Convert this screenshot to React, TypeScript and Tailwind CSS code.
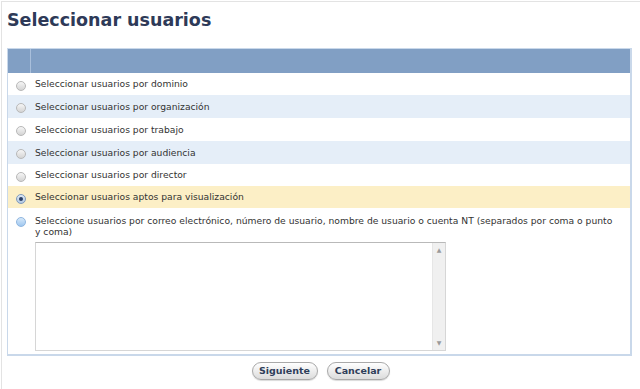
import React from "react";

type Row = { label: string; bg: string; h: string; state: "off" | "on" };

const ROWS: Row[] = [
  { label: "Seleccionar usuarios por dominio", bg: "bg-white", h: "h-[22px]", state: "off" },
  { label: "Seleccionar usuarios por organización", bg: "bg-[#e5eef8]", h: "h-[23px]", state: "off" },
  { label: "Seleccionar usuarios por trabajo", bg: "bg-white", h: "h-[23px]", state: "off" },
  { label: "Seleccionar usuarios por audiencia", bg: "bg-[#e5eef8]", h: "h-[23px]", state: "off" },
  { label: "Seleccionar usuarios por director", bg: "bg-white", h: "h-[22px]", state: "off" },
  { label: "Seleccionar usuarios aptos para visualización", bg: "bg-[#fcefc6]", h: "h-[22px]", state: "on" },
];

function Radio({ state }: { state: "off" | "on" | "hover" }) {
  if (state === "on") {
    return (
      <span className="flex h-[10px] w-[10px] items-center justify-center rounded-full border border-[#7f9bbd] bg-gradient-to-b from-[#dfe9f5] to-[#b3c8e2]">
        <span className="h-[4px] w-[4px] rounded-full bg-[#2a3f66]" />
      </span>
    );
  }
  if (state === "hover") {
    return (
      <span className="block h-[10px] w-[10px] rounded-full border border-[#8fb6e0] bg-gradient-to-b from-[#d7e9fa] to-[#9fc7ef]" />
    );
  }
  return (
    <span className="block h-[10px] w-[10px] rounded-full border border-[#b8b8b8] bg-gradient-to-b from-[#f6f6f6] to-[#d4d4d4]" />
  );
}

function Btn({ children, w }: { children: React.ReactNode; w: string }) {
  return (
    <button
      className={`${w} h-[18px] rounded-full border border-[#a9a9a9] bg-gradient-to-b from-white to-[#dcdcdc] text-[9.5px] font-bold text-[#2f3e5a] shadow-[0_1px_1px_rgba(0,0,0,0.15)]`}
    >
      {children}
    </button>
  );
}

export default function App() {
  return (
    <div
      className="h-[389px] w-[640px] overflow-hidden bg-white pl-px pt-px"
      style={{ fontFamily: '"DejaVu Sans", Verdana, sans-serif' }}
    >
      <div className="h-full border-l border-t border-[#e3e3e3] pl-[5px]">
        <h1 className="pt-[7px] text-[17.5px] font-bold leading-[22px] text-[#2e3a58]">
          Seleccionar usuarios
        </h1>

        <div className="mt-[17px] w-[625px] border border-[#c9d8ea] border-b-2 border-r-2 bg-white">
          <div className="flex h-[24px] bg-[#819fc4]">
            <div className="w-[23px] border-r border-[#a9bfdb]" />
            <div className="flex-1" />
          </div>

          {ROWS.map((r) => (
            <div key={r.label} className={`flex items-center ${r.h} ${r.bg}`}>
              <div className="flex w-[24px] justify-center pl-px pt-[3px]">
                <Radio state={r.state} />
              </div>
              <span className="pl-[3px] text-[9.2px] text-[#333333]">{r.label}</span>
            </div>
          ))}

          <div className="flex h-[146px]">
            <div className="flex w-[24px] justify-center pl-px pt-[9px]">
              <Radio state="hover" />
            </div>
            <div className="flex-1 pl-[3px] pr-[12px] pt-[7px]">
              <p className="text-[9.2px] leading-[11px] text-[#333333]">
                Seleccione usuarios por correo electrónico, número de usuario, nombre de usuario o cuenta NT (separados por coma o punto y coma)
              </p>
              <div className="mt-[5px] flex h-[109px] w-[411px] border border-[#d6d6d6] border-t-[#b9b9b9] bg-white">
                <div className="flex-1" />
                <div className="flex w-[13px] flex-col items-center justify-between border-l border-[#e6e6e6] bg-[#f0f0f0] py-[4px] text-[6px] leading-[6px] text-[#9a9a9a]">
                  <span>▲</span>
                  <span>▼</span>
                </div>
              </div>
            </div>
          </div>
        </div>

        <div className="mt-[6px] flex justify-center gap-[9px] pr-[6px]">
          <Btn w="w-[66px]">Siguiente</Btn>
          <Btn w="w-[63px]">Cancelar</Btn>
        </div>
      </div>
    </div>
  );
}
